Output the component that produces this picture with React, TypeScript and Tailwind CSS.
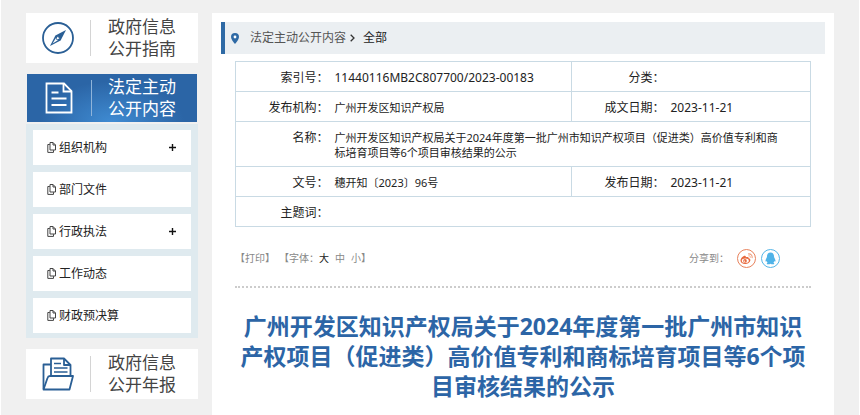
import type { ReactNode } from "react";

const menu = [
  { label: "组织机构", expandable: true },
  { label: "部门文件", expandable: false },
  { label: "行政执法", expandable: true },
  { label: "工作动态", expandable: false },
  { label: "财政预决算", expandable: false },
];

function CompassIcon() {
  return (
    <svg width="32" height="32" viewBox="0 0 32 32" fill="none" aria-hidden="true">
      <circle cx="16" cy="16" r="15" stroke="#2a5f95" strokeWidth="1.8" />
      <path d="M24 8 L18.6 18.6 L8 24 L13.4 13.4 Z" fill="#2a5f95" />
      <path d="M10.6 21.4 L14.2 15.4 L16.6 17.8 Z" fill="#fff" />
      <circle cx="15.8" cy="16.2" r="1.6" fill="#fff" stroke="#2a5f95" strokeWidth="1" />
    </svg>
  );
}

function DocumentIcon() {
  return (
    <svg width="28" height="32" viewBox="0 0 28 32" fill="none" stroke="#fff" strokeWidth="1.8" aria-hidden="true">
      <path d="M1.5 1.5 H19 L26.5 9 V30.5 H1.5 Z" />
      <path d="M18.5 1.5 V9.5 H26.5" />
      <path d="M6.5 10.5 H13.5 M6.5 16.5 H21.5 M6.5 23 H21.5" />
    </svg>
  );
}

function FolderIcon() {
  return (
    <svg width="32" height="34" viewBox="0 0 32 34" fill="none" stroke="#2a5f95" strokeWidth="1.8" strokeLinejoin="round" aria-hidden="true">
      <path d="M9 7.5 H1.5 V32" />
      <path d="M9 19 V1.5 H22 L28.5 8 V19" />
      <path d="M22 1.5 V8 H28.5" />
      <path d="M12 6.5 H19 M12 11 H25.5 M12 15 H25.5" strokeWidth="1.4" />
      <path d="M5.5 21 Q6 19 8 19 H31 L27.5 32.5 H1.5 Z" />
    </svg>
  );
}

function PagesIcon() {
  return (
    <svg width="9" height="11" viewBox="0 0 9 11" fill="none" stroke="#444" strokeWidth="1" aria-hidden="true">
      <path d="M3 0.5 H6 L8.5 3 V8 H3 Z" />
      <path d="M6 0.5 V3 H8.5" />
      <path d="M2.8 2.5 H0.8 V10.4 H6.5 V8.2" />
    </svg>
  );
}

function WeiboIcon() {
  return (
    <svg width="13" height="12" viewBox="0 0 13 12" fill="none" aria-hidden="true">
      <path d="M0.5 7.6 C0.5 5.4 3.4 2.6 5 2.8 C6 2.9 5.9 3.8 5.7 4.3 C7 3.7 8.8 3.6 8.6 5.2 C10 5.6 10.5 6.3 10.4 7.3 C10.2 9.6 7.6 11 5.2 11 C2.6 11 0.5 9.7 0.5 7.6 Z" fill="#e8683c" />
      <ellipse cx="5.3" cy="7.8" rx="3.5" ry="2.2" fill="#fff" />
      <circle cx="5" cy="7.9" r="1.8" fill="#e8683c" />
      <circle cx="4.6" cy="8.2" r="0.6" fill="#fff" />
      <path d="M8 1 C10.6 0.4 12.8 2.6 12 5.2" stroke="#f0a080" strokeWidth="1.1" />
      <path d="M8.4 2.8 C9.8 2.5 10.7 3.5 10.3 4.7" stroke="#f0a080" strokeWidth="0.9" />
    </svg>
  );
}

function QqIcon() {
  return (
    <svg width="11" height="13" viewBox="0 0 11 13" fill="#4fb3e8" aria-hidden="true">
      <path d="M5.5 0.5 C8 0.5 9 2.3 9 4.4 C9 5.8 10.6 7.2 10.5 9 C10.4 10 9.8 9.6 9.3 9 C9.2 9.8 8.9 10.3 8.4 10.8 C9.8 11.4 9.4 12.3 8 12.3 C6.8 12.3 6.2 12 5.5 11.7 C4.8 12 4.2 12.3 3 12.3 C1.6 12.3 1.2 11.4 2.6 10.8 C2.1 10.3 1.8 9.8 1.7 9 C1.2 9.6 0.6 10 0.5 9 C0.4 7.2 2 5.8 2 4.4 C2 2.3 3 0.5 5.5 0.5 Z" />
    </svg>
  );
}

function SectionLink({ icon, lines, active = false }: { icon: ReactNode; lines: string[]; active?: boolean }) {
  return (
    <a
      href="#"
      className={
        active
          ? "mx-px flex h-12 items-center bg-[#2b65a6] bg-[radial-gradient(ellipse_at_50%_100%,#3f8bd2_0%,#2b65a6_60%)] text-white"
          : "flex h-[50px] items-center bg-white text-[#444]"
      }
    >
      <span className="flex w-16 shrink-0 justify-center">{icon}</span>
      <span className={active ? "h-9 w-px bg-[#8fb4da]" : "h-9 w-px bg-[#d4d4d4]"} />
      <span className={active ? "pl-4 text-[17px] leading-[22px]" : "pl-[17px] text-[17px] leading-[22px]"}>
        {lines.map((line) => (
          <span key={line} className="block whitespace-nowrap">
            {line}
          </span>
        ))}
      </span>
    </a>
  );
}

function Label({ children }: { children: ReactNode }) {
  return (
    <th scope="row" className="border-y border-l border-[#c9dae4] pt-2 pb-1.5 text-right align-top text-xs leading-[15px] font-normal">
      {children}
    </th>
  );
}

function Value({ children, span = 1, numeric = false }: { children?: ReactNode; span?: number; numeric?: boolean }) {
  return (
    <td
      colSpan={span}
      className={
        numeric
          ? "border-y border-r border-[#c9dae4] pt-2 pb-1.5 pl-1.5 align-top text-xs leading-[15px]"
          : "border-y border-r border-[#c9dae4] pt-2 pr-1 pb-1.5 pl-1.5 align-top"
      }
    >
      {children}
    </td>
  );
}

export default function App() {
  return (
    <div className="flex min-h-screen items-stretch gap-3.5 border-x border-white bg-[#f0f0f0] pt-[13px] pr-[25px] pl-[25px] font-['Noto_Sans','Noto_Sans_CJK_SC',sans-serif] text-[#222]">
      <aside className="w-[172px] shrink-0">
        <SectionLink icon={<CompassIcon />} lines={["政府信息", "公开指南"]} />
        <div className="my-[11px]">
          <SectionLink active icon={<DocumentIcon />} lines={["法定主动", "公开内容"]} />
          <ul className="mt-0.5 flex flex-col gap-[7px] bg-[#dfeaef] px-[7px] pt-1.5 pb-[5px]">
            {menu.map((item) => (
              <li key={item.label} className="flex h-[35px] items-center bg-white pr-[15px] pl-3.5">
                <a href="#" className="flex flex-1 items-center gap-[3px] text-xs">
                  <PagesIcon />
                  {item.label}
                </a>
                {item.expandable && (
                  <button type="button" aria-label={"展开" + item.label}>
                    <svg width="7" height="7" viewBox="0 0 7 7" stroke="#111" strokeWidth="1.4" aria-hidden="true">
                      <path d="M0 3.5 H7 M3.5 0 V7" />
                    </svg>
                  </button>
                )}
              </li>
            ))}
          </ul>
        </div>
        <SectionLink icon={<FolderIcon />} lines={["政府信息", "公开年报"]} />
      </aside>

      <main className="min-w-0 flex-1 bg-white px-[9px] pt-[9px]">
        <nav className="flex h-8 items-center border-l-4 border-[#2f6aa5] bg-[#ebeff2] pl-1.5 text-xs">
          <svg width="8" height="11" viewBox="0 0 8 11" aria-hidden="true">
            <path d="M4 0 A4 4 0 0 1 8 4 C8 6.5 5.5 9 4 11 C2.5 9 0 6.5 0 4 A4 4 0 0 1 4 0 Z" fill="#2f6aa5" />
            <circle cx="4" cy="4" r="1.4" fill="#fff" />
          </svg>
          <a href="#" className="ml-[11px] text-[#555]">
            法定主动公开内容
          </a>
          <svg className="mr-2 ml-1" width="5" height="8" viewBox="0 0 5 8" fill="none" stroke="#333" strokeWidth="1.3" aria-hidden="true">
            <path d="M0.7 0.7 L4 4 L0.7 7.3" />
          </svg>
          <a href="#">全部</a>
        </nav>

        <div className="px-3.5 pt-[7px]">
          <table className="w-full table-fixed border-collapse text-[11px] leading-[15px]">
            <colgroup>
              <col className="w-[93px]" />
              <col className="w-[243px]" />
              <col className="w-[93px]" />
              <col />
            </colgroup>
            <tbody>
              <tr>
                <Label>索引号：</Label>
                <Value numeric>11440116MB2C807700/2023-00183</Value>
                <Label>分类：</Label>
                <Value />
              </tr>
              <tr>
                <Label>发布机构：</Label>
                <Value>广州开发区知识产权局</Value>
                <Label>成文日期：</Label>
                <Value numeric>2023-11-21</Value>
              </tr>
              <tr>
                <Label>名称：</Label>
                <Value span={3}>
                  广州开发区知识产权局关于2024年度第一批广州市知识产权项目（促进类）高价值专利和商
                  <wbr />
                  <span className="inline-block">标培育项目等6个项目审核结果的公示</span>
                </Value>
              </tr>
              <tr>
                <Label>文号：</Label>
                <Value>穗开知〔2023〕96号</Value>
                <Label>发布日期：</Label>
                <Value numeric>2023-11-21</Value>
              </tr>
              <tr>
                <Label>主题词：</Label>
                <Value span={3} />
              </tr>
            </tbody>
          </table>

          <div className="flex items-center border-b-2 border-dotted border-[#ccc] pt-[22px] pb-[18px] text-[10px] text-[#888]">
            <button type="button">【打印】</button>
            <div className="ml-1 flex items-center">
              <span>【字体：</span>
              <button type="button" className="text-[#222]">
                大
              </button>
              <button type="button" className="mx-1.5">
                中
              </button>
              <button type="button">小</button>
              <span>】</span>
            </div>
            <div className="mr-[31px] ml-auto flex items-center gap-[5px]">
              <span className="mr-[3px]">分享到：</span>
              <a href="#" aria-label="微博" className="flex size-[19px] items-center justify-center rounded-full border border-[#e8825c]">
                <WeiboIcon />
              </a>
              <a href="#" aria-label="QQ" className="flex size-[19px] items-center justify-center rounded-full border border-[#56b6e7]">
                <QqIcon />
              </a>
            </div>
          </div>

          <h1 className="pt-[23px] text-center text-[23px] leading-[30px] font-bold text-[#2c65a6]">
            广州开发区知识产权局关于2024年度第一批广州市知识产权项目（促进类）高价值专利和商标培育项目等6个项目审核结果的公示
          </h1>
        </div>
      </main>
    </div>
  );
}
